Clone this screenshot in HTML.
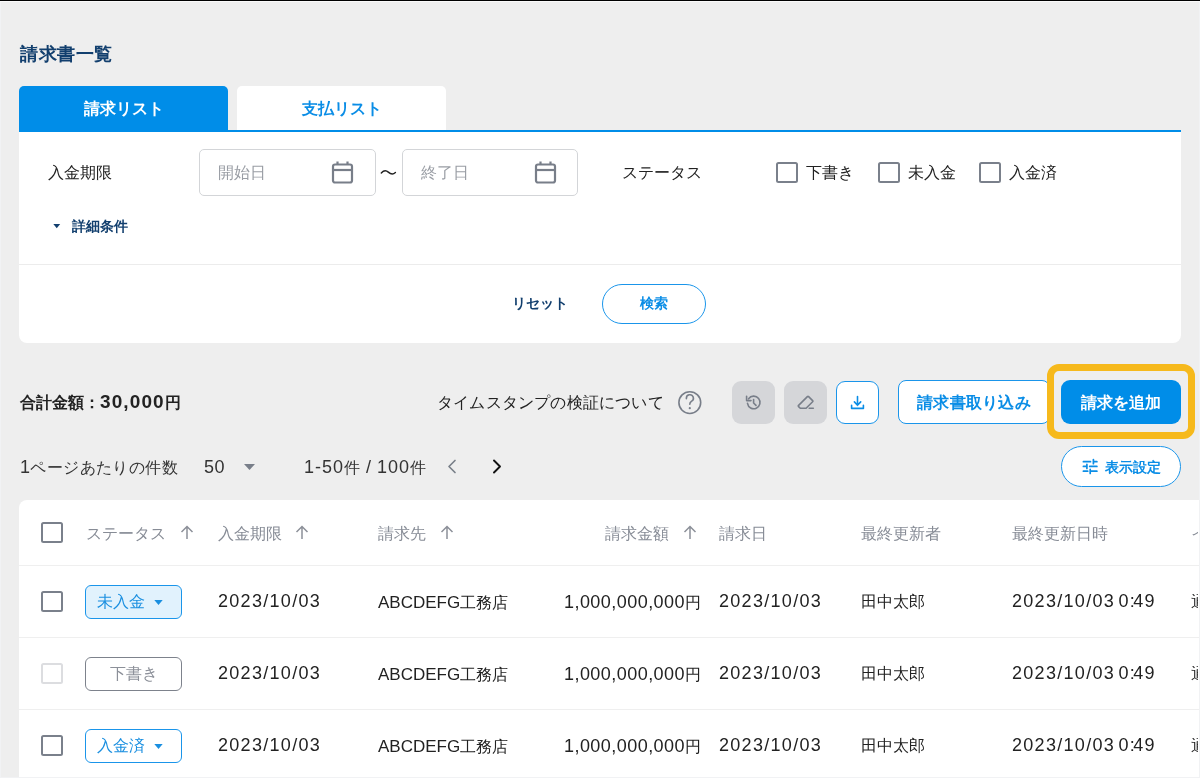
<!DOCTYPE html>
<html lang="ja">
<head>
<meta charset="utf-8">
<style>
*{box-sizing:border-box;margin:0;padding:0}
html,body{width:1200px;height:778px;overflow:hidden}
body{background:#eeeeee;font-family:"Liberation Sans",sans-serif;color:#222;position:relative}
.a{position:absolute;white-space:nowrap;line-height:1;will-change:transform}
.topline{left:0;top:0;width:1200px;height:1px;background:#000}
.topwhite{left:0;top:1px;width:1200px;height:1px;background:#fafafa}
.leftstrip{left:0;top:2px;width:1px;height:776px;background:#f1f2f4;z-index:5}
.rightstrip{left:1199px;top:2px;width:1px;height:776px;background:#f1f2f4;z-index:5}
.botstrip{left:0;top:777px;width:1200px;height:1px;background:#f1f2f4;z-index:5}
.clipr{left:1198px;top:2px;width:1px;height:776px;z-index:4}
.title{left:20px;top:45px;font-size:18px;letter-spacing:0.5px;font-weight:bold;color:#123f6e}
.tab{top:86px;height:46px;width:209px;border-radius:5px 5px 0 0;font-size:16px;font-weight:bold;text-align:center;line-height:46px}
.tab1{left:19px;background:#008de8;color:#fff}
.tab2{left:237px;background:#fff;color:#0a8de6}
.tabline{left:19px;top:130px;width:1162px;height:2px;background:#008de8}
.card{left:19px;top:132px;width:1162px;height:211px;background:#fff;border-radius:0 0 8px 8px}
.lbl{font-size:16px;color:#222}
.inp{top:149px;height:47px;width:176px;border:1px solid #d3d5d8;border-radius:5px;background:#fff}
.ph{font-size:16px;color:#9a9ea5}
.cb{width:21.5px;height:21px;border:2.5px solid #7a808b;border-radius:2.5px}
.divider{left:19px;top:264px;width:1162px;height:1px;background:#ececec}
.btn{border:1.5px solid #1a95ea;background:#fff;color:#0a8de6;font-weight:bold;text-align:center}
.tbl{left:19px;top:500px;width:1190px;height:277px;background:#fff;border-radius:8px 0 0 0}
.row-b{left:19px;width:1181px;height:1px;background:#efefef}
.th{font-size:16px;color:#878c96}
.td{font-size:16px;color:#222}
.num{font-size:18px;letter-spacing:1.3px}
.lat{font-size:17px}
.amt{font-size:18px;letter-spacing:0.45px}
.badge{left:85px;width:97px;height:34px;border-radius:6px;font-size:16px;line-height:31px;padding-left:11px}
</style>
</head>
<body>
<div class="a topline"></div>
<div class="a topwhite"></div>
<div class="a leftstrip"></div>
<div class="a rightstrip"></div>
<div class="a botstrip"></div>

<div class="a title">請求書一覧</div>

<div class="a tab tab1">請求リスト</div>
<div class="a tab tab2">支払リスト</div>
<div class="a card"></div>
<div class="a tabline"></div>

<!-- filter row -->
<div class="a lbl" style="left:48px;top:165px">入金期限</div>
<div class="a inp" style="left:199px;width:177px"></div>
<div class="a ph" style="left:218px;top:165px">開始日</div>
<svg class="a" style="left:331px;top:160px" width="23" height="25" viewBox="0 0 23 25"><rect x="2" y="4.5" width="19" height="18" rx="2" fill="none" stroke="#787e89" stroke-width="2.2"/><line x1="2" y1="10" x2="21" y2="10" stroke="#787e89" stroke-width="2.2"/><line x1="6.5" y1="1.5" x2="6.5" y2="5" stroke="#787e89" stroke-width="2.2"/><line x1="16.5" y1="1.5" x2="16.5" y2="5" stroke="#787e89" stroke-width="2.2"/></svg>
<svg class="a" style="left:380px;top:168px" width="17" height="9" viewBox="0 0 17 9"><path d="M1.3 4.9C3.5 2.6 6 2.1 8.3 4.1S12.8 6.9 15.4 4.5" fill="none" stroke="#222" stroke-width="1.45" stroke-linecap="round"/></svg>
<div class="a inp" style="left:402px"></div>
<div class="a ph" style="left:421px;top:165px">終了日</div>
<svg class="a" style="left:534px;top:160px" width="23" height="25" viewBox="0 0 23 25"><rect x="2" y="4.5" width="19" height="18" rx="2" fill="none" stroke="#787e89" stroke-width="2.2"/><line x1="2" y1="10" x2="21" y2="10" stroke="#787e89" stroke-width="2.2"/><line x1="6.5" y1="1.5" x2="6.5" y2="5" stroke="#787e89" stroke-width="2.2"/><line x1="16.5" y1="1.5" x2="16.5" y2="5" stroke="#787e89" stroke-width="2.2"/></svg>

<div class="a lbl" style="left:622px;top:165px">ステータス</div>
<div class="a cb" style="left:776px;top:162px"></div>
<div class="a lbl" style="left:806px;top:165px">下書き</div>
<div class="a cb" style="left:878px;top:162px"></div>
<div class="a lbl" style="left:908px;top:165px">未入金</div>
<div class="a cb" style="left:979px;top:162px"></div>
<div class="a lbl" style="left:1009px;top:165px">入金済</div>

<svg class="a" style="left:53px;top:223.5px" width="8" height="5" viewBox="0 0 8 5"><path d="M0.3 0H7.2L3.75 4.3Z" fill="#123f6e"/></svg>
<div class="a" style="left:72px;top:219px;font-size:14px;font-weight:bold;color:#123f6e">詳細条件</div>

<div class="a divider"></div>
<div class="a" style="left:512px;top:296px;font-size:14px;font-weight:bold;color:#123f6e">リセット</div>
<div class="a btn" style="left:602px;top:284px;width:104px;height:40px;border-radius:20px;font-size:14px;line-height:37px">検索</div>

<!-- summary row -->
<div class="a" style="left:20px;top:392px;font-size:16px;font-weight:bold;color:#222">合計金額：<span style="font-size:19px;letter-spacing:1.1px">30,000</span>円</div>
<div class="a lbl" style="left:437px;top:395px;letter-spacing:0.2px">タイムスタンプの検証について</div>
<svg class="a" style="left:677px;top:390px" width="26" height="26" viewBox="0 0 26 26"><g fill="none" stroke="#787e89" stroke-width="1.6" stroke-linecap="round"><circle cx="12.8" cy="12.6" r="10.9"/><path d="M9.4 8.6A3.5 3.5 0 1 1 14.4 11.4Q12.8 12.5 12.8 14.3"/></g><circle cx="12.8" cy="18.2" r="1.1" fill="#787e89"/></svg>

<div class="a" style="left:732px;top:381px;width:43px;height:43px;border-radius:9px;background:#d5d6d9"></div>
<svg class="a" style="left:745px;top:394px" width="17" height="17" viewBox="0 0 17 17"><g fill="none" stroke="#787e89" stroke-width="1.6" stroke-linecap="round" stroke-linejoin="round"><path d="M3.6 4.8A6.3 6.3 0 1 1 2.5 9.4"/><path d="M1.6 2.2V6.6H6"/><path d="M8.6 5.6V9L11 11.4"/></g></svg>
<div class="a" style="left:784px;top:381px;width:43px;height:43px;border-radius:9px;background:#d5d6d9"></div>
<svg class="a" style="left:797px;top:394px" width="18" height="17" viewBox="0 0 18 17"><g fill="none" stroke="#787e89" stroke-width="1.6" stroke-linecap="round" stroke-linejoin="round"><path d="M3.3 14.3L1.6 12.6Q1 12 1.6 11.4L10.4 2.6Q11 2 11.6 2.6L15.6 6.6Q16.2 7.2 15.6 7.8L9.1 14.3Z"/><path d="M12.2 14.3H16.3"/></g></svg>
<div class="a btn" style="left:836px;top:381px;width:43px;height:43px;border-radius:9px"></div>
<svg class="a" style="left:849px;top:394px" width="17" height="17" viewBox="0 0 17 17"><g fill="none" stroke="#0a8de6" stroke-width="1.6" stroke-linecap="round" stroke-linejoin="round"><path d="M8.5 2.6V11.3M5.4 7.9L8.5 11.3L11.7 7.9"/><path d="M2.6 11.3V14.4H14.4V11.3"/></g></svg>

<div class="a btn" style="left:898px;top:380px;width:152px;height:44px;border-radius:8px;font-size:16px;line-height:43px;letter-spacing:0.3px">請求書取り込み</div>
<div class="a" style="left:1046.5px;top:364px;width:147.5px;height:75px;border:7.2px solid #f6b91c;border-radius:12px"></div>
<div class="a" style="left:1061px;top:380px;width:120px;height:44px;border-radius:9px;background:#008de8;color:#fff;font-size:16px;font-weight:bold;text-align:center;line-height:46px">請求を追加</div>

<!-- paging row -->
<div class="a lbl" style="left:20px;top:458px;color:#333;letter-spacing:0.4px"><span style="font-size:18px">1</span>ページあたりの件数</div>
<div class="a" style="left:204px;top:458px;font-size:18px;letter-spacing:0.5px;color:#333">50</div>
<svg class="a" style="left:244px;top:464px" width="11" height="6" viewBox="0 0 11 6"><path d="M0 0H11L5.5 6Z" fill="#787e89"/></svg>
<div class="a lbl" style="left:304px;top:458px;color:#333"><span style="font-size:18px;letter-spacing:1px">1-50</span>件<span style="font-size:18px;word-spacing:1px"> / </span><span style="font-size:18px;letter-spacing:1px">100</span>件</div>
<svg class="a" style="left:446px;top:459px" width="12" height="15" viewBox="0 0 12 15"><path d="M9 1.5L3 7.5L9 13.5" fill="none" stroke="#7a808a" stroke-width="1.7" stroke-linecap="round" stroke-linejoin="round"/></svg>
<svg class="a" style="left:491px;top:459px" width="12" height="15" viewBox="0 0 12 15"><path d="M3 1.5L9 7.5L3 13.5" fill="none" stroke="#111" stroke-width="1.9" stroke-linecap="round" stroke-linejoin="round"/></svg>
<div class="a btn" style="left:1061px;top:446px;width:120px;height:41px;border-radius:21px"></div>
<svg class="a" style="left:1082px;top:458px" width="16" height="17" viewBox="0 0 16 17"><g fill="none" stroke="#0a8de6" stroke-width="1.7" stroke-linecap="round"><path d="M1.4 3.7H8.5M11.4 1.5V5.7M11.4 3.7H14.9"/><path d="M1.4 8.4H4.9M4.9 6.4V10.5M7.7 8.4H14.9"/><path d="M1.4 13.2H5.7M8.2 11.4V15.4M8.2 13.2H14.9"/></g></svg>
<div class="a" style="left:1105px;top:460px;font-size:14px;font-weight:bold;color:#0a8de6">表示設定</div>

<!-- table -->
<div class="a tbl"></div>
<div class="a row-b" style="top:565px"></div>
<div class="a row-b" style="top:637px"></div>
<div class="a row-b" style="top:709px"></div>

<div class="a cb" style="left:41px;top:522px"></div>
<div class="a th" style="left:86px;top:526px">ステータス</div>
<svg class="a" style="left:180px;top:525px" width="14" height="15" viewBox="0 0 14 15"><path d="M7 14V1.5M1.5 7L7 1.5L12.5 7" fill="none" stroke="#8c9099" stroke-width="1.5"/></svg>
<div class="a th" style="left:218px;top:526px">入金期限</div>
<svg class="a" style="left:295px;top:525px" width="14" height="15" viewBox="0 0 14 15"><path d="M7 14V1.5M1.5 7L7 1.5L12.5 7" fill="none" stroke="#8c9099" stroke-width="1.5"/></svg>
<div class="a th" style="left:378px;top:526px">請求先</div>
<svg class="a" style="left:440px;top:525px" width="14" height="15" viewBox="0 0 14 15"><path d="M7 14V1.5M1.5 7L7 1.5L12.5 7" fill="none" stroke="#8c9099" stroke-width="1.5"/></svg>
<div class="a th" style="left:605px;top:526px">請求金額</div>
<svg class="a" style="left:683px;top:525px" width="14" height="15" viewBox="0 0 14 15"><path d="M7 14V1.5M1.5 7L7 1.5L12.5 7" fill="none" stroke="#8c9099" stroke-width="1.5"/></svg>
<div class="a th" style="left:719px;top:526px">請求日</div>
<div class="a th" style="left:861px;top:526px">最終更新者</div>
<div class="a th" style="left:1012px;top:526px">最終更新日時</div>
<div class="a th" style="left:1191px;top:526px;width:7px;overflow:hidden">イ</div>

<div class="a cb" style="left:41px;top:591px"></div>
<div class="a badge" style="top:585px;background:#e1f2fd;border:1.5px solid #1a95ea;color:#1a8fe0">未入金<svg style="position:absolute;left:68px;top:13.5px" width="9" height="5" viewBox="0 0 9 5"><path d="M0.3 0H8.7L4.5 5Z" fill="#1a8fe0"/></svg></div>
<div class="a td num" style="left:218px;top:592px">2023/10/03</div>
<div class="a td" style="left:378px;top:594px"><span class="lat">ABCDEFG</span>工務店</div>
<div class="a td" style="left:564px;top:593px"><span class="amt">1,000,000,000</span>円</div>
<div class="a td num" style="left:719px;top:592px">2023/10/03</div>
<div class="a td" style="left:861px;top:594px">田中太郎</div>
<div class="a td num" style="left:1012px;top:592px;word-spacing:-3px">2023/10/03 0<span style="letter-spacing:-1.5px">:</span>49</div>
<div class="a td" style="left:1191px;width:7px;overflow:hidden;top:594px">通</div>
<div class="a cb" style="left:41px;top:663px;border-color:#dcdde0"></div>
<div class="a badge" style="top:657px;background:#fff;border:1.5px solid #7d828c;color:#8c9099;text-align:center;padding-left:0">下書き</div>
<div class="a td num" style="left:218px;top:664px">2023/10/03</div>
<div class="a td" style="left:378px;top:666px"><span class="lat">ABCDEFG</span>工務店</div>
<div class="a td" style="left:564px;top:665px"><span class="amt">1,000,000,000</span>円</div>
<div class="a td num" style="left:719px;top:664px">2023/10/03</div>
<div class="a td" style="left:861px;top:666px">田中太郎</div>
<div class="a td num" style="left:1012px;top:664px;word-spacing:-3px">2023/10/03 0<span style="letter-spacing:-1.5px">:</span>49</div>
<div class="a td" style="left:1191px;width:7px;overflow:hidden;top:666px">通</div>
<div class="a cb" style="left:41px;top:735px"></div>
<div class="a badge" style="top:729px;background:#fff;border:1.5px solid #1a95ea;color:#1a8fe0">入金済<svg style="position:absolute;left:68px;top:13.5px" width="9" height="5" viewBox="0 0 9 5"><path d="M0.3 0H8.7L4.5 5Z" fill="#1a8fe0"/></svg></div>
<div class="a td num" style="left:218px;top:736px">2023/10/03</div>
<div class="a td" style="left:378px;top:738px"><span class="lat">ABCDEFG</span>工務店</div>
<div class="a td" style="left:564px;top:737px"><span class="amt">1,000,000,000</span>円</div>
<div class="a td num" style="left:719px;top:736px">2023/10/03</div>
<div class="a td" style="left:861px;top:738px">田中太郎</div>
<div class="a td num" style="left:1012px;top:736px;word-spacing:-3px">2023/10/03 0<span style="letter-spacing:-1.5px">:</span>49</div>
<div class="a td" style="left:1191px;width:7px;overflow:hidden;top:738px">通</div>
</body>
</html>
